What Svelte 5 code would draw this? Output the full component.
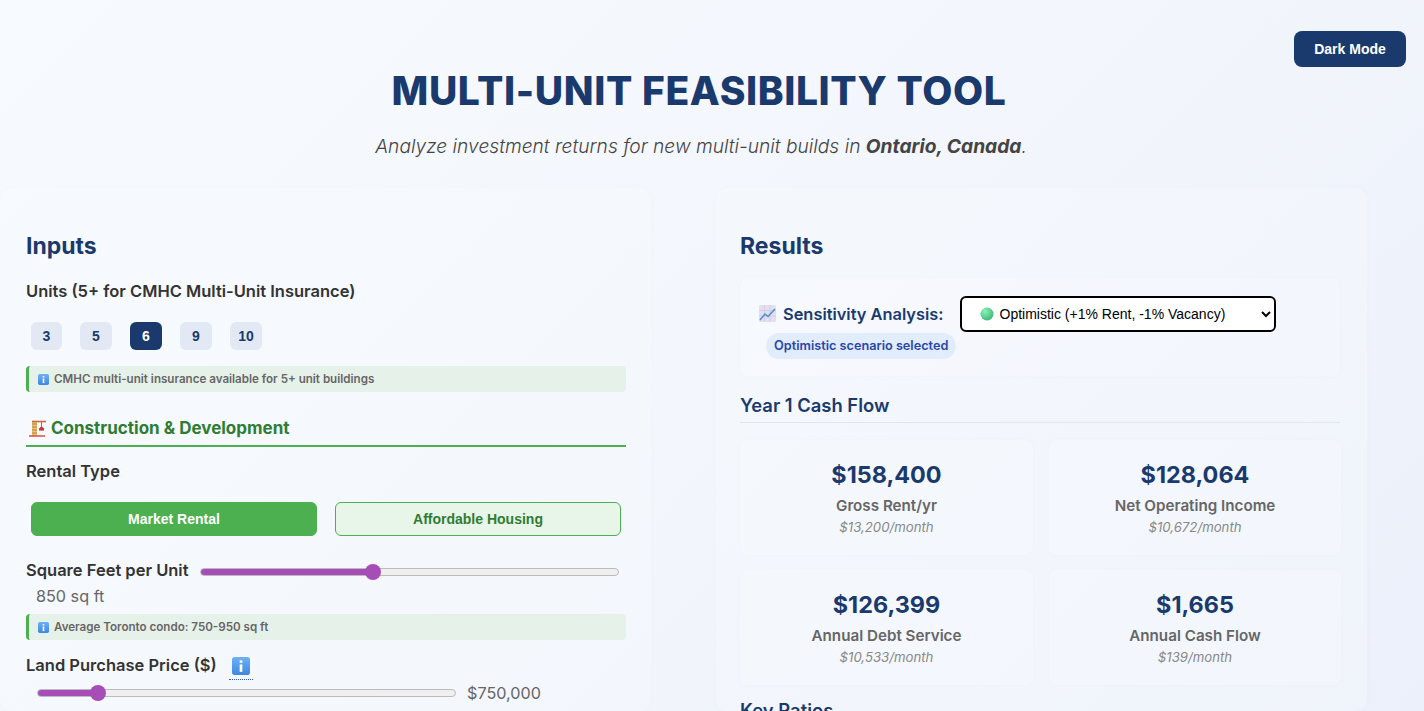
<script>
	let units = $state(6);
	let rentalType = $state('market');
	let sqft = $state(850);
	let land = $state(750000);
	let scenario = $state('optimistic');

	const unitOptions = [3, 5, 6, 9, 10];

	const cards = [
		{ value: '$158,400', label: 'Gross Rent/yr', sub: '$13,200/month' },
		{ value: '$128,064', label: 'Net Operating Income', sub: '$10,672/month' },
		{ value: '$126,399', label: 'Annual Debt Service', sub: '$10,533/month' },
		{ value: '$1,665', label: 'Annual Cash Flow', sub: '$139/month' }
	];

	// where the thumb centre sits, so the purple part of the track ends under it
	function fill(val, min, max) {
		const f = (val - min) / (max - min);
		return ((8 + f * 401) / 417) * 100;
	}
</script>

{#snippet info(size)}
	<svg class="info-icon" width={size} height={size} viewBox="0 0 16 16" aria-hidden="true">
		<defs>
			<linearGradient id="info-bg" x1="0" y1="0" x2="0" y2="1">
				<stop offset="0" stop-color="#6db1f5" />
				<stop offset="1" stop-color="#3f87e0" />
			</linearGradient>
		</defs>
		<rect width="16" height="16" rx="2.5" fill="url(#info-bg)" />
		<rect x="6.8" y="3" width="2.4" height="2.2" fill="#fff" />
		<rect x="6.8" y="6.6" width="2.4" height="6.6" fill="#fff" />
	</svg>
{/snippet}

<div class="page">
	<button class="theme-toggle">Dark Mode</button>

	<header>
		<h1>Multi-Unit Feasibility Tool</h1>
		<p class="subtitle">Analyze investment returns for new multi-unit builds in <strong>Ontario, Canada</strong>.</p>
	</header>

	<main class="columns">
		<section class="panel inputs">
			<h2>Inputs</h2>

			<div class="field-label units-label">Units (5+ for CMHC Multi-Unit Insurance)</div>
			<div class="unit-row">
				{#each unitOptions as u}
					<button class="unit-btn" class:active={units === u} onclick={() => (units = u)}>{u}</button>
				{/each}
			</div>
			<div class="note">{@render info(11)} CMHC multi-unit insurance available for 5+ unit buildings</div>

			<h3 class="section-title">
				<svg width="18" height="17" viewBox="0 0 18 17" aria-hidden="true">
					<rect x="3" y="1" width="5" height="15" fill="#e9c27a" />
					<path d="M3 4h5M3 7h5M3 10h5M3 13h5" stroke="#b5813c" stroke-width="1" />
					<path d="M3 1.5h14" stroke="#c9683a" stroke-width="1.6" />
					<path d="M12.5 2v4" stroke="#777" stroke-width="1" />
					<path d="M9.5 9l3-3 3 3z" fill="#c23b3b" />
					<rect x="10" y="9" width="5" height="1.6" fill="#c23b3b" />
					<path d="M0 16h16" stroke="#d9402f" stroke-width="1.4" />
				</svg>
				Construction &amp; Development
			</h3>

			<div class="field-label rental-label">Rental Type</div>
			<div class="rental-row">
				<button class="rental-btn" class:active={rentalType === 'market'} onclick={() => (rentalType = 'market')}>Market Rental</button>
				<button class="rental-btn" class:active={rentalType === 'affordable'} onclick={() => (rentalType = 'affordable')}>Affordable Housing</button>
			</div>

			<div class="slider-row sqft">
				<span class="field-label">Square Feet per Unit</span>
				<input class="slider" type="range" min="400" max="1500" bind:value={sqft} style="--pct: {fill(sqft, 400, 1500)}%" />
			</div>
			<div class="value sqft-value">{sqft} sq ft</div>
			<div class="note tight">{@render info(11)} Average Toronto condo: 750-950 sq ft</div>

			<div class="field-label land-label">
				Land Purchase Price ($)
				<span class="tip">{@render info(18)}</span>
			</div>
			<div class="slider-row land">
				<input class="slider" type="range" min="300000" max="3750000" step="10000" bind:value={land} style="--pct: {fill(land, 300000, 3750000)}%" />
				<span class="value">${land.toLocaleString('en-US')}</span>
			</div>
		</section>

		<section class="panel results">
			<h2>Results</h2>

			<div class="sensitivity">
				<div class="sensitivity-row">
					<span class="sensitivity-label">
						<svg width="17" height="17" viewBox="0 0 17 17" aria-hidden="true">
							<rect width="17" height="17" rx="1.5" fill="#e3dfee" />
							<path d="M0 5.5h17M0 11h17M5.5 0v17M11 0v17" stroke="#cfc6dc" stroke-width=".7" />
							<path d="M1 15l5-6 3 2.5L16 4" fill="none" stroke="#4c8fd6" stroke-width="1.5" />
						</svg>
						Sensitivity Analysis:
					</span>
					<div class="select-wrap">
						<svg class="dot" width="14" height="14" viewBox="0 0 14 14" aria-hidden="true">
							<defs>
								<radialGradient id="dot" cx="0.35" cy="0.3" r="0.8">
									<stop offset="0" stop-color="#8ff0b4" />
									<stop offset="1" stop-color="#2fb673" />
								</radialGradient>
							</defs>
							<circle cx="7" cy="7" r="6.5" fill="url(#dot)" />
						</svg>
						<select bind:value={scenario}>
							<option value="base">Base Case</option>
							<option value="optimistic">Optimistic (+1% Rent, -1% Vacancy)</option>
							<option value="pessimistic">Pessimistic (-1% Rent, +1% Vacancy)</option>
						</select>
					</div>
				</div>
				<span class="scenario-pill">Optimistic scenario selected</span>
			</div>

			<h3 class="results-title">Year 1 Cash Flow</h3>
			<div class="cards">
				{#each cards as card}
					<div class="card">
						<div class="card-value">{card.value}</div>
						<div class="card-label">{card.label}</div>
						<div class="card-sub">{card.sub}</div>
					</div>
				{/each}
			</div>

			<h3 class="results-title ratios">Key Ratios</h3>
		</section>
	</main>
</div>

<style>
	:global(body) {
		margin: 0;
		overflow: hidden;
		font-family: Inter, 'Open Sans', sans-serif;
		background: #f3f6fc;
	}

	.page {
		position: relative;
		height: 711px;
		overflow: hidden;
		background: linear-gradient(135deg, #f7fafe 0%, #f3f6fc 50%, #ebf0fa 100%);
	}

	.theme-toggle {
		position: absolute;
		top: 31px;
		right: 18px;
		width: 112px;
		height: 36px;
		border: none;
		border-radius: 8px;
		background: #1a3a6e;
		color: #fff;
		font: bold 14px 'Liberation Sans', sans-serif;
	}

	header {
		width: 1398px;
		height: 188px;
		text-align: center;
		overflow: hidden;
	}

	h1 {
		margin: 67px 0 0;
		font-size: 39px;
		line-height: 48px;
		font-weight: 800;
		color: #1a3a6e;
		text-transform: uppercase;
		letter-spacing: 0.6px;
	}

	.subtitle {
		margin: 18px 0 0 4px;
		font-size: 19.2px;
		line-height: 26px;
		font-style: italic;
		font-weight: 300;
		color: #444;
	}

	.subtitle strong {
		font-weight: 700;
	}

	.columns {
		display: grid;
		grid-template-columns: 651px 651px;
		gap: 65px;
	}

	.panel {
		height: 523px;
		box-sizing: border-box;
		border-radius: 12px;
		background: rgba(248, 251, 255, 0.3);
		box-shadow: 0 0 10px rgba(30, 60, 120, 0.015);
	}

	.inputs {
		padding: 44px 25px 0 26px;
	}

	.results {
		padding: 44px 27px 0 24px;
	}

	h2 {
		margin: 0;
		font-size: 23px;
		line-height: 28px;
		font-weight: 700;
		color: #1a3a6e;
	}

	.field-label {
		font-size: 16.5px;
		line-height: 22px;
		font-weight: 600;
		color: #333;
	}

	.units-label {
		margin-top: 20px;
	}

	.unit-row {
		display: flex;
		gap: 18px;
		margin: 20px 0 0 5px;
	}

	.unit-btn {
		height: 28px;
		min-width: 31px;
		padding: 0 8px;
		box-sizing: border-box;
		border: none;
		border-radius: 6px;
		background: #e2e9f5;
		color: #1a3a6e;
		font: bold 14px 'Liberation Sans', sans-serif;
	}

	.unit-btn:nth-child(n + 2) {
		min-width: 32px;
	}

	.unit-btn.active {
		background: #1a3a6e;
		color: #fff;
	}

	.note {
		display: flex;
		align-items: center;
		gap: 5px;
		margin-top: 16px;
		height: 26px;
		padding-left: 9px;
		box-sizing: border-box;
		border-left: 3px solid #4caf50;
		border-radius: 4px;
		background: #e6f1ea;
		font-size: 11.6px;
		font-weight: 600;
		color: #666;
	}

	.note.tight {
		margin-top: 7px;
	}

	.info-icon {
		display: block;
		flex: none;
	}

	.section-title {
		display: flex;
		align-items: center;
		gap: 4px;
		margin: 25px 0 0;
		height: 22px;
		padding: 0 0 6px 3px;
		border-bottom: 2px solid #4caf50;
		font-size: 17px;
		line-height: 22px;
		font-weight: 700;
		color: #2e7d32;
	}

	.rental-label {
		margin-top: 13px;
	}

	.rental-row {
		display: flex;
		gap: 18px;
		margin: 20px 5px 0;
	}

	.rental-btn {
		flex: 1;
		height: 34px;
		border: 1px solid #4caf50;
		border-radius: 6px;
		background: #e8f5e9;
		color: #2e7d32;
		font: bold 14px 'Liberation Sans', sans-serif;
	}

	.rental-btn.active {
		background: #4caf50;
		color: #fff;
	}

	.slider-row {
		display: flex;
		align-items: center;
	}

	.slider-row.sqft {
		gap: 11px;
		margin-top: 23px;
		height: 22px;
	}

	.slider-row.sqft .slider {
		margin-top: 4px;
	}

	.slider-row.land {
		gap: 11px;
		margin: 3px 0 0 11px;
		height: 26px;
	}

	.slider-row.land .slider {
		margin-top: 0;
	}

	.slider {
		-webkit-appearance: none;
		appearance: none;
		width: 419px;
		height: 8px;
		margin: 2px 0 0;
		flex: none;
		box-sizing: border-box;
		border: 1px solid #bbb;
		border-radius: 4px;
		background: linear-gradient(to right, #a64db8 var(--pct), #efefef var(--pct));
	}

	.slider::-webkit-slider-thumb {
		-webkit-appearance: none;
		appearance: none;
		width: 16px;
		height: 16px;
		border-radius: 50%;
		background: #a64db8;
	}

	.value {
		font-size: 16.2px;
		line-height: 22px;
		color: #666;
	}

	.sqft-value {
		margin: 4px 0 0 10px;
	}

	.land-label {
		display: flex;
		align-items: center;
		gap: 12px;
		margin-top: 13px;
		height: 24px;
	}

	.tip {
		display: block;
		padding: 0 3px 4px;
		border-bottom: 1px dotted #2a5bb0;
		margin-top: 6px;
	}

	.sensitivity {
		margin-top: 18px;
		height: 98px;
		padding: 17px 19px 0;
		box-sizing: border-box;
		border-radius: 8px;
		background: rgba(250, 252, 255, 0.25);
		box-shadow: 0 0 6px rgba(30, 60, 120, 0.015);
	}

	.sensitivity-row {
		display: flex;
		align-items: center;
		gap: 16px;
		margin-top: 1px;
	}

	.sensitivity-label {
		display: flex;
		align-items: center;
		gap: 7px;
		margin-top: -1px;
		font-size: 16.4px;
		font-weight: 600;
		color: #1a3a6e;
	}

	.select-wrap {
		position: relative;
		display: block;
	}

	.dot {
		position: absolute;
		left: 20px;
		top: 11px;
		pointer-events: none;
	}

	select {
		display: block;
		width: 316px;
		height: 36px;
		padding-left: 34px;
		box-sizing: border-box;
		border: 2px solid #000;
		border-radius: 6px;
		background: #fff;
		color: #000;
		font: 14px 'Liberation Sans', sans-serif;
	}

	.scenario-pill {
		display: inline-block;
		margin: 1px 0 0 7px;
		padding: 0 8px;
		height: 26px;
		line-height: 26px;
		border-radius: 13px;
		background: #e1ecfc;
		color: #2a46a8;
		font-size: 12.7px;
		font-weight: 600;
	}

	.results-title {
		margin: 17px 0 0;
		height: 30px;
		box-sizing: border-box;
		border-bottom: 1px solid #e1e6ee;
		font-size: 18.4px;
		line-height: 24px;
		font-weight: 600;
		color: #1a3a6e;
	}

	.results-title.ratios {
		margin-top: 13px;
		border-bottom: none;
	}

	.cards {
		display: grid;
		grid-template-columns: 293px 292px;
		gap: 15px 16px;
		margin-top: 17px;
	}

	.card {
		height: 115px;
		padding-top: 19px;
		box-sizing: border-box;
		text-align: center;
		border-radius: 8px;
		background: rgba(250, 252, 255, 0.3);
		box-shadow: 0 0 6px rgba(30, 60, 120, 0.015);
	}

	.card-value {
		font-size: 23.4px;
		line-height: 32px;
		font-weight: 700;
		color: #1a3a6e;
	}

	.card-label {
		margin-top: 5px;
		font-size: 15.2px;
		line-height: 20px;
		font-weight: 600;
		color: #666;
	}

	.card-sub {
		margin-top: 1px;
		font-size: 13.2px;
		line-height: 20px;
		font-style: italic;
		color: #888;
	}
</style>
